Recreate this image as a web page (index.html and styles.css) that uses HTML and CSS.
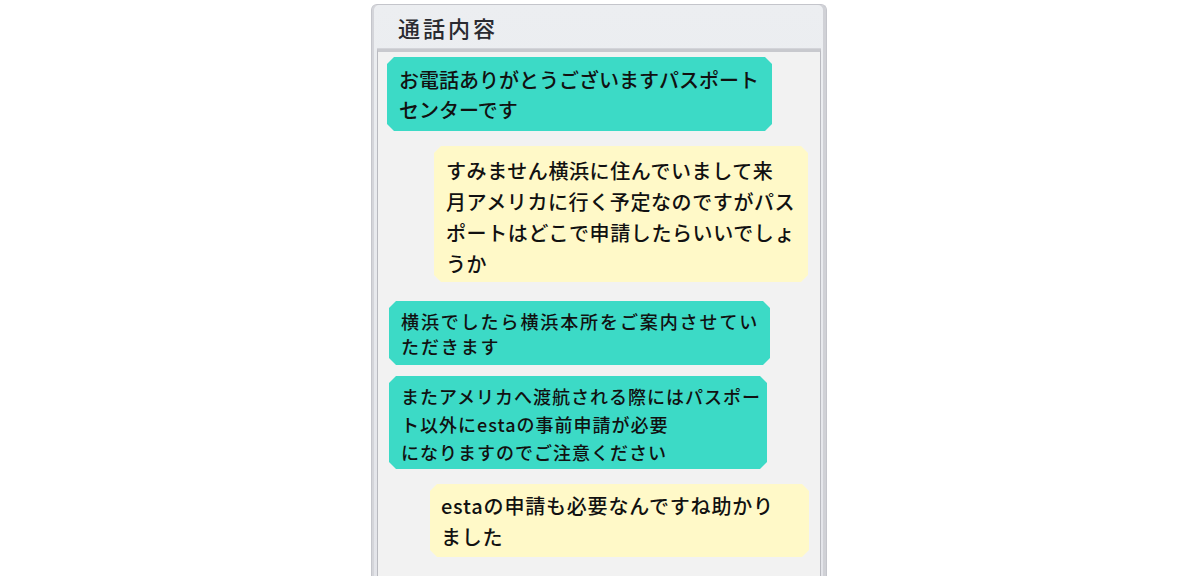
FILE: index.html
```html
<!DOCTYPE html>
<html lang="ja">
<head>
<meta charset="utf-8">
<title>通話内容</title>
<link rel="stylesheet" href="styles.css">
</head>
<body>
<div class="panel">
  <div class="header"><span class="title">通話内容</span></div>
  <div class="chat">
    <div class="bubble op b1">お電話ありがとうございますパスポート<br>センターです</div>
    <div class="bubble cu b2">すみません横浜に住んでいまして来<br>月アメリカに行く予定なのですがパス<br>ポートはどこで申請したらいいでしょ<br>うか</div>
    <div class="bubble op b3">横浜でしたら横浜本所をご案内させてい<br>ただきます</div>
    <div class="bubble op b4">またアメリカへ渡航される際にはパスポー<br>ト以外にestaの事前申請が必要<br>になりますのでご注意ください</div>
    <div class="bubble cu b5">estaの申請も必要なんですね助かり<br>ました</div>
  </div>
</div>
</body>
</html>
```

FILE: styles.css
```css
html, body {
  margin: 0;
  padding: 0;
  background: #ffffff;
  height: 576px;
  overflow: hidden;
}
body {
  font-family: "Noto Sans CJK JP", "Noto Sans", sans-serif;
  color: #111111;
}
.panel {
  margin: 4px 0 0 371px;
  width: 456px;
  height: 580px;
  border: 1px solid #c4c5cb;
  border-bottom: none;
  border-radius: 6px 6px 0 0;
  background: linear-gradient(#eceef1, #e3e4e9);
  padding: 0 5px;
  box-sizing: border-box;
  display: flex;
  flex-direction: column;
  box-shadow: inset 2px 0 0 #d4d5da, inset -3px 0 0 #d0d1d6;
}
.header {
  height: 43px;
  display: flex;
  align-items: center;
  padding-left: 21px;
  border-bottom: 1px solid #d3d4d9;
}
.title {
  font-size: 22px;
  font-weight: 500;
  letter-spacing: 3px;
  color: #2a2a30;
  line-height: 1;
}
.chat {
  flex: 1;
  background: #f2f2f2;
  border: 1px solid #b9bac0;
  border-top: 3px solid #c8c9ce;
  display: flex;
  flex-direction: column;
  align-items: flex-start;
}
.bubble {
  box-sizing: border-box;
  padding-left: 12px;
  white-space: nowrap;
  font-weight: 500;
  clip-path: polygon(7px 0, calc(100% - 7px) 0, 100% 7px, 100% calc(100% - 7px), calc(100% - 7px) 100%, 7px 100%, 0 calc(100% - 7px), 0 7px);
}
.op { background: #3cdac6; }
.cu { background: #fff9c8; }
.b1 {
  margin: 5px 0 0 9px;
  width: 385px;
  height: 74px;
  font-size: 20px;
  line-height: 30px;
  padding-top: 8px;
}
.b2 {
  margin: 15px 0 0 56px;
  width: 374px;
  height: 136px;
  font-size: 20px;
  letter-spacing: 0.6px;
  line-height: 31px;
  padding-top: 9px;
}
.b3 {
  margin: 19px 0 0 11px;
  width: 381px;
  height: 64px;
  font-size: 18px;
  letter-spacing: 1.9px;
  line-height: 25px;
  padding-top: 8px;
}
.b4 {
  margin: 11px 0 0 11px;
  width: 378px;
  height: 93px;
  font-size: 18px;
  letter-spacing: 1px;
  line-height: 28px;
  padding-top: 6px;
}
.b5 {
  margin: 15px 0 0 52px;
  width: 379px;
  height: 73px;
  font-size: 20px;
  letter-spacing: 0.8px;
  line-height: 31px;
  padding-top: 6px;
  padding-left: 11px;
}
```
